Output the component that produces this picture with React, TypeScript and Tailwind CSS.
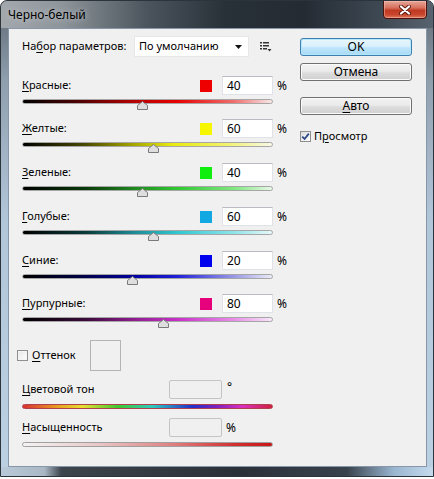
import React from 'react';

type Channel = {
  label: string;
  at: number;
  swatch: string;
  value: number;
  track: string;
  h: string;
};

const channels: Channel[] = [
  {
    label: 'Красные:',
    at: 0,
    swatch: 'bg-[#ee0000]',
    value: 40,
    track: 'bg-[linear-gradient(to_right,#000_0%,#5a0000_25%,#b80000_45%,#e80000_62%,#f07070_85%,#f8e8e8_100%)]',
    h: 'h-[43px]',
  },
  {
    label: 'Желтые:',
    at: 0,
    swatch: 'bg-[#f6f600]',
    value: 60,
    track: 'bg-[linear-gradient(to_right,#000_0%,#4a4a00_25%,#a8a800_45%,#eaea10_60%,#f2f270_82%,#f8f8e8_100%)]',
    h: 'h-[44px]',
  },
  {
    label: 'Зеленые:',
    at: 0,
    swatch: 'bg-[#10ee10]',
    value: 40,
    track: 'bg-[linear-gradient(to_right,#000_0%,#0a3a0a_25%,#1e8a1e_45%,#30c830_62%,#80e880_85%,#e8f8e8_100%)]',
    h: 'h-[44px]',
  },
  {
    label: 'Голубые:',
    at: 0,
    swatch: 'bg-[#12a8e2]',
    value: 60,
    track: 'bg-[linear-gradient(to_right,#000_0%,#0a3a3a_25%,#1e8c96_45%,#30c8d0_62%,#90e4ea_85%,#e8f8f8_100%)]',
    h: 'h-[44px]',
  },
  {
    label: 'Синие:',
    at: 0,
    swatch: 'bg-[#0000ee]',
    value: 20,
    track: 'bg-[linear-gradient(to_right,#000_0%,#00004a_25%,#0000a0_45%,#2020d8_62%,#9a9ae8_85%,#ececf8_100%)]',
    h: 'h-[43px]',
  },
  {
    label: 'Пурпурные:',
    at: 0,
    swatch: 'bg-[#e6007c]',
    value: 80,
    track: 'bg-[linear-gradient(to_right,#000_0%,#3a0a3a_25%,#901e90_45%,#c830c8_62%,#e890e8_85%,#f8e8f8_100%)]',
    h: 'h-[44px]',
  },
];

const Acc: React.FC<{ text: string; at: number }> = ({ text, at }) => (
  <span className="whitespace-nowrap">
    {text.slice(0, at)}
    <span className="underline underline-offset-2">{text.charAt(at)}</span>
    {text.slice(at + 1)}
  </span>
);

const Thumb: React.FC<{ left: number }> = ({ left }) => (
  <svg
    className="absolute top-[2px]"
    style={{ left: left - 5 }}
    width="11"
    height="9"
    viewBox="0 0 11 9"
  >
    <path d="M5.5 0.5 L10.5 4.5 L10.5 8.5 L0.5 8.5 L0.5 4.5 Z" fill="#dedede" stroke="#7a7a7a" />
  </svg>
);

const Button: React.FC<{ children: React.ReactNode; primary?: boolean; className?: string }> = ({
  children,
  primary,
  className,
}) => (
  <div
    className={
      'h-[18px] w-[112px] rounded-[3px] border flex items-center justify-center text-[12px] leading-none ' +
      (primary
        ? 'border-[#3c7fb1] bg-[linear-gradient(to_bottom,#eaf6fd_0%,#d9f0fc_45%,#bee6fd_55%,#a7d9f5_100%)] shadow-[inset_0_0_0_1px_#b6e6fb] '
        : 'border-[#707070] bg-[linear-gradient(to_bottom,#f2f2f2_0%,#ebebeb_45%,#dddddd_55%,#cfcfcf_100%)] shadow-[inset_0_0_0_1px_#fbfbfb] ') +
      (className ?? '')
    }
  >
    {children}
  </div>
);

export default function App() {
  return (
    <div className="w-[434px] h-[479px] bg-white font-['Noto_Sans','Open_Sans',sans-serif] text-black">
      <div className="h-[477px] flex flex-col rounded-t-[7px] border border-[#2b333b] bg-[linear-gradient(to_bottom,#5e6872_0px,#8f9fae_80px,#b2c6da_220px,#bcd0e4_100%)] overflow-hidden">
        {/* Title bar */}
        <div className="h-[27px] shrink-0 flex items-start justify-between pl-[7px] pr-[6px] bg-[linear-gradient(to_right,#a3a8ad_0%,#8e959b_14%,#4b545c_34%,#283038_52%,#242b33_70%,#3f4954_88%,#586370_100%)]">
          <span className="mt-[6px] text-[12px] leading-[16px] [text-shadow:0_0_6px_rgba(255,255,255,0.6)]">
            Черно-белый
          </span>
          <div className="w-[44px] h-[19px] -mt-px rounded-b-[4px] border border-[#4a1208] bg-[linear-gradient(to_bottom,#e6a79b_0%,#d7705d_40%,#c03a22_55%,#c8452c_80%,#dc7a60_100%)] shadow-[inset_0_0_0_1px_rgba(255,200,190,0.45)] flex items-center justify-center">
            <svg width="12" height="10" viewBox="0 0 12 10">
              <path d="M2 1.5 L10 8.5 M10 1.5 L2 8.5" stroke="#5a1a10" strokeWidth="4" strokeLinecap="round" />
              <path d="M2 1.5 L10 8.5 M10 1.5 L2 8.5" stroke="#ffffff" strokeWidth="2.2" strokeLinecap="round" />
            </svg>
          </div>
        </div>

        {/* Client area */}
        <div className="flex-1 ml-[7px] mr-[6px] border border-[#8797a7] bg-[#f0f0f0] flex">
          {/* Left column */}
          <div className="w-[279px] pl-[13px] pt-[7px] flex flex-col">
            <div className="h-[21px] flex items-center text-[11px]">
              <span className="w-[112px]">
                <Acc text="Набор параметров:" at={2} />
              </span>
              <div className="w-[115px] h-[21px] bg-white border border-[#e6e6e6] flex items-center pl-[4px] pr-[6px] justify-between">
                <span className="whitespace-nowrap">По умолчанию</span>
                <svg width="7" height="4" viewBox="0 0 7 4">
                  <path d="M0 0 L7 0 L3.5 4 Z" fill="#111" />
                </svg>
              </div>
              <svg className="ml-[11px]" width="12" height="10" viewBox="0 0 12 10">
                <rect x="0" y="0" width="2" height="1.5" fill="#333" />
                <rect x="3" y="0" width="6" height="1.5" fill="#333" />
                <rect x="0" y="3" width="2" height="1.5" fill="#333" />
                <rect x="3" y="3" width="6" height="1.5" fill="#333" />
                <rect x="0" y="6" width="2" height="1.5" fill="#333" />
                <rect x="3" y="6" width="4" height="1.5" fill="#333" />
                <path d="M7.5 7 L11.5 7 L9.5 9.5 Z" fill="#333" />
              </svg>
            </div>

            <div className="mt-[19px] flex flex-col">
              {channels.map((c) => (
                <div key={c.label} className={c.h + ' flex flex-col'}>
                  <div className="h-[19px] flex items-center text-[11px]">
                    <span className="w-[178px]">
                      <Acc text={c.label} at={c.at} />
                    </span>
                    <div className={c.swatch + ' w-[12px] h-[12px]'} />
                    <div className="ml-[10px] w-[51px] h-[19px] bg-white border border-[#dfe3e8] border-t-[#b8bcc2] flex items-center pl-[4px] text-[12px]">
                      {c.value}
                    </div>
                    <span className="ml-[4px] text-[12px]">%</span>
                  </div>
                  <div className="relative mt-[4px] w-[251px] h-[5px]">
                    <div className={c.track + ' w-full h-full rounded-full border border-[#a6a6a6]'} />
                    <Thumb left={((c.value + 200) / 500) * 251} />
                  </div>
                </div>
              ))}
            </div>

            {/* Tint */}
            <div className="mt-[2px] h-[31px] flex items-center -ml-[5px] text-[11px]">
              <div className="w-[11px] h-[11px] border border-[#8f8f8f] bg-[linear-gradient(135deg,#e6e6e6,#ffffff)] shadow-[inset_0_0_0_1px_#f4f4f4]" />
              <span className="ml-[4px] w-[58px]">
                <Acc text="Оттенок" at={0} />
              </span>
              <div className="w-[31px] h-[31px] border border-[#b4b4b4] bg-[#f0f0f0]" />
            </div>

            <div className="mt-[9px] h-[19px] flex items-center text-[11px]">
              <span className="w-[147px]">
                <Acc text="Цветовой тон" at={0} />
              </span>
              <div className="w-[53px] h-[19px] border border-[#c4c4c4] rounded-[2px] bg-[#f0f0f0]" />
              <span className="ml-[5px] -mt-[6px] text-[12px]">°</span>
            </div>
            <div className="mt-[5px] w-[251px] h-[5px] rounded-full border border-[#b04050] bg-[linear-gradient(to_right,#d83030_0%,#e8a020_14%,#e8e030_24%,#40c830_38%,#30c8c0_52%,#2030c8_68%,#8020c0_78%,#d830c0_88%,#d02040_100%)]" />

            <div className="mt-[9px] h-[19px] flex items-center text-[11px]">
              <span className="w-[147px]">
                <Acc text="Насыщенность" at={0} />
              </span>
              <div className="w-[53px] h-[19px] border border-[#c4c4c4] rounded-[2px] bg-[#f0f0f0]" />
              <span className="ml-[4px] text-[12px]">%</span>
            </div>
            <div className="mt-[5px] w-[251px] h-[5px] rounded-full border border-[#a0a0a0] bg-[linear-gradient(to_right,#f4f4f4_0%,#e8c8c8_30%,#e08080_60%,#d03030_85%,#c81818_100%)]" />
          </div>

          {/* Right column */}
          <div className="ml-[12px] pt-[9px] flex flex-col">
            <Button primary>OK</Button>
            <Button className="mt-[7px]">Отмена</Button>
            <Button className="mt-[16px]">
              <Acc text="Авто" at={0} />
            </Button>
            <div className="mt-[14px] h-[14px] flex items-center text-[11px]">
              <div className="w-[11px] h-[11px] border border-[#8f8f8f] bg-[linear-gradient(135deg,#dcdcdc,#ffffff)] flex items-center justify-center">
                <svg width="9" height="9" viewBox="0 0 9 9">
                  <path d="M1.2 4.6 L3.6 7 L7.8 1.6" stroke="#2d4a8a" strokeWidth="1.8" fill="none" />
                </svg>
              </div>
              <span className="ml-[3px]">
                <Acc text="Просмотр" at={1} />
              </span>
            </div>
          </div>
        </div>

        {/* Bottom frame */}
        <div className="h-[9px] shrink-0 bg-[linear-gradient(to_right,#b9c9d9_0%,#aab8c6_10%,#3c444c_14%,#2a3038_55%,#38424c_80%,#9ab6d0_91%,#c6daee_100%)]" />
      </div>
    </div>
  );
}
